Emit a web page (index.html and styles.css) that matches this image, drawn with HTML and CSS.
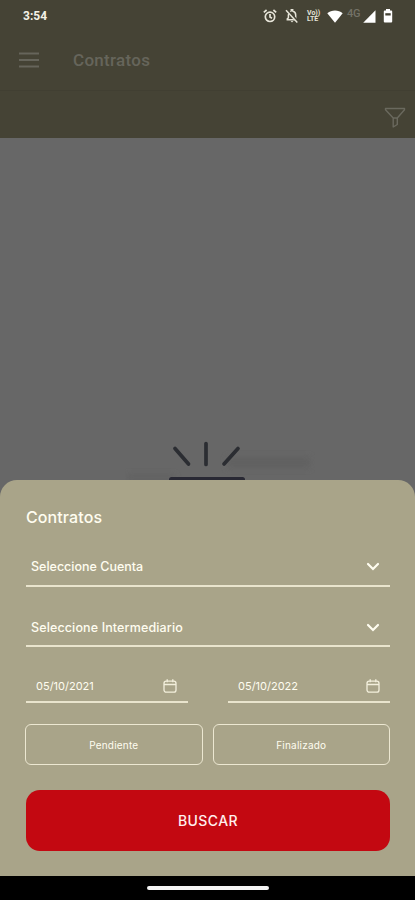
FILE: index.html
```html
<!DOCTYPE html>
<html lang="es">
<head>
<meta charset="utf-8">
<meta name="viewport" content="width=device-width, initial-scale=1">
<title>Contratos</title>
<link rel="stylesheet" href="styles.css">
</head>
<body>
<header class="header">
  <div class="status">
    <span class="time">3:54</span>
    <div class="status-icons">
      <svg class="alarm" width="14" height="14" viewBox="0 0 14 14" fill="none" stroke="#e6e4d8" stroke-width="1.7"><circle cx="7" cy="7.8" r="4.7"/><path d="M7 5v3l2 1.2M.8 3.4 3.6 1M13.2 3.4 10.4 1"/></svg>
      <svg class="bell" width="14" height="14" viewBox="0 0 14 14"><path d="M4.1 4.3C4.400 3 5.200 2.200 6.300 1.900V.8h1.400v1.100c2 .5 3 2.200 3 4.100v4.800H2.300v-1l1.100-1V6z" fill="none" stroke="#e6e4d8" stroke-width="1.500"/><path d="M5.700 12h2.600L7 13.500z" fill="#e6e4d8"/><path d="M2 1 13 13" stroke="#454335" stroke-width="2.600"/><path d="M1 1.300 12.300 13.500" stroke="#e6e4d8" stroke-width="1.500"/></svg>
      <span class="volte"><span>Vo))</span><span>LTE</span></span>
      <svg class="wifi" width="16" height="13" viewBox="0 0 16 13"><path d="M.3 3.200C4.700-.3 11.300-.3 15.700 3.200L8 12.700z" fill="#fff"/></svg>
      <span class="net">4G</span>
      <svg class="signal" width="13" height="13" viewBox="0 0 13 13"><path d="M12.500.3v12.400H.2z" fill="#fff"/></svg>
      <svg class="battery" width="10" height="14" viewBox="0 0 10 14"><path d="M3 0h4v1.500h1.200q1 0 1 1v10q0 1-1 1H1.800q-1 0-1-1v-10q0-1 1-1H3z" fill="#fff"/><path d="M2.300 4.200h5.400v2.300H2.300z" fill="#454335"/></svg>
    </div>
  </div>
  <div class="toolbar">
    <svg width="20" height="16" viewBox="0 0 20 16" stroke="#66655b" stroke-width="1.800"><path d="M0 1.500h20M0 8h20M0 14.500h20"/></svg>
    <h1>Contratos</h1>
  </div>
  <div class="filterbar">
    <svg width="22" height="22" viewBox="0 0 22 22" fill="none" stroke="#6a695e" stroke-width="1.400" stroke-linejoin="round"><path d="M1.500 1.500h19v1.300L13.300 11v6.500L9.200 20v-9L1.500 2.800zM9.200 11h4.100"/></svg>
  </div>
</header>
<main class="empty">
  <svg width="190" height="44" viewBox="0 0 190 44">
    <defs><filter id="soft" x="-10%" y="-80%" width="120%" height="260%"><feGaussianBlur stdDeviation="3"/></filter></defs>
    <path d="M102 21h83v11h-83zM2 39h48v5H2z" fill="#616161" filter="url(#soft)"/>
    <path d="M50 12.500 63.500 28M81 7.500v21M113 12.500 99 28" fill="none" stroke="#2b2d32" stroke-width="3.700" stroke-linecap="round"/>
    <path d="M45.500 45v-1.500q0-1 1-1h71q1 0 1 1V45" fill="none" stroke="#292934" stroke-width="3"/>
  </svg>
</main>
<section class="sheet">
  <h2>Contratos</h2>
  <div class="select account"><span>Seleccione Cuenta</span><svg width="14" height="10" viewBox="0 0 14 10"><path d="m2 2 5 5 5-5"/></svg></div>
  <div class="select broker"><span>Seleccione Intermediario</span><svg width="14" height="10" viewBox="0 0 14 10"><path d="m2 2 5 5 5-5"/></svg></div>
  <div class="dates">
    <div class="date"><span>05/10/2021</span><svg width="14" height="14" viewBox="0 0 14 14"><rect x="1" y="2.200" width="12" height="11" rx="2.200"/><path d="M1 5.500h12M4.200.3v3M9.800.3v3"/></svg></div>
    <div class="date to"><span>05/10/2022</span><svg width="14" height="14" viewBox="0 0 14 14"><rect x="1" y="2.200" width="12" height="11" rx="2.200"/><path d="M1 5.500h12M4.200.3v3M9.800.3v3"/></svg></div>
  </div>
  <div class="states">
    <button>Pendiente</button>
    <button class="done">Finalizado</button>
  </div>
  <button class="search">BUSCAR</button>
</section>
<footer class="nav"><span class="pill"></span></footer>
</body>
</html>
```
FILE: styles.css
```css
* { box-sizing: border-box; }
body {
  margin: 0;
  height: 900px;
  display: flex;
  flex-direction: column;
  overflow: hidden;
  background: #676767;
  font-family: Inter, "Open Sans", sans-serif;
}
h1, h2 { margin: 0; }
svg { display: block; flex: none; }
button { font: inherit; color: inherit; background: none; padding: 0; margin: 0; }

.header { height: 138px; flex: none; background: #454335; }
.status {
  height: 32px;
  padding: 0 22px 0 23px;
  display: flex;
  justify-content: space-between;
  align-items: center;
}
.time { font: 700 12px Roboto, sans-serif; color: #f3f1e6; }
.status-icons { display: flex; align-items: center; }
.bell { margin-left: 8px; }
.volte {
  width: 15px;
  margin-left: 8px;
  display: flex;
  flex-direction: column;
  font: 700 7px/6.5px Roboto, sans-serif;
  color: #e6e4d8;
}
.wifi { margin-left: 5px; }
.net { width: 14px; margin: -5px 0 0 4px; font: 500 11px Roboto, sans-serif; letter-spacing: -0.2px; color: #747267; }
.signal { margin-left: 2px; }
.battery { margin-left: 7px; }

.toolbar {
  height: 59px;
  padding: 0 19px 3px;
  display: flex;
  align-items: center;
  gap: 34px;
  border-bottom: 1px solid #413f32;
}
.toolbar h1 { padding-top: 1px; font: 500 17px/24px Roboto, sans-serif; letter-spacing: 0.3px; color: #66655b; }
.filterbar { height: 47px; padding: 6px 9px 0 0; display: flex; align-items: center; justify-content: flex-end; }

.empty { height: 342px; flex: none; padding-left: 125px; display: flex; align-items: flex-end; }

.sheet {
  height: 396px;
  flex: none;
  padding: 0 25px 0 26px;
  background: #a9a489;
  border-radius: 17px 17px 0 0;
  color: #fffdf0;
}
.sheet h2 { padding-top: 26px; font-size: 16px; line-height: 22px; font-weight: 500; letter-spacing: 0.1px; }
.select {
  height: 39px;
  margin-top: 20px;
  padding: 0 10px 0 5px;
  display: flex;
  justify-content: space-between;
  align-items: center;
  border-bottom: 2px solid #e9e4cd;
  font-size: 12.5px;
  font-weight: 500;
}
.broker { margin-top: 21px; padding-top: 2px; letter-spacing: 0.13px; }
.select svg { fill: none; stroke: #fffdf0; stroke-width: 2.2; stroke-linecap: round; }
.dates { display: flex; justify-content: space-between; margin-top: 23px; }
.date {
  width: 162px;
  height: 33px;
  padding: 0 11px 0 10px;
  display: flex;
  justify-content: space-between;
  align-items: center;
  border-bottom: 2px solid #e9e4cd;
  font-size: 11px;
}
.date.to { padding-right: 10px; }
.date svg { fill: none; stroke: #f3efdc; stroke-width: 1.3; }
.states { display: flex; gap: 10px; margin: 21px 0 0 -1px; }
.states button {
  flex: 1;
  height: 41px;
  border: 1.5px solid #ece7d1;
  border-radius: 6px;
  font-size: 10px;
  letter-spacing: 0.2px;
}
.search {
  display: block;
  width: 100%;
  height: 61px;
  margin-top: 25px;
  border: 0;
  border-radius: 14px;
  background: #c30811;
  color: #fff0ee;
  font-size: 14px;
  font-weight: 500;
  letter-spacing: 0.4px;
}
.nav { height: 24px; flex: none; background: #000; display: flex; align-items: center; justify-content: center; }
.pill { width: 122px; height: 4px; border-radius: 2px; background: #f4f4f4; }
```
